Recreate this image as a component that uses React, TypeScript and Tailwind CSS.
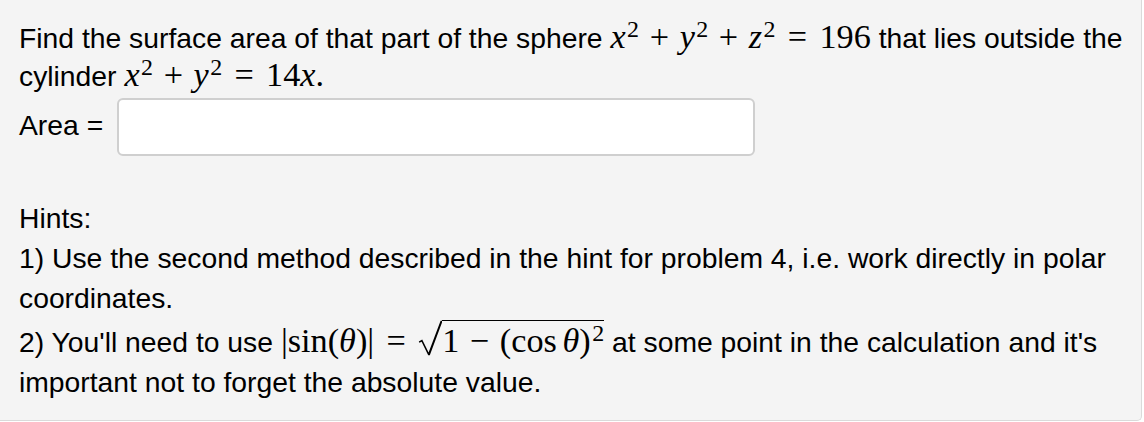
import type { ReactNode } from 'react';

const Mi = ({ children }: { children: ReactNode }) => <span className="italic">{children}</span>;

const Bin = ({ children }: { children: ReactNode }) => <span className="mx-[0.31em]">{children}</span>;

const Rel = ({ children }: { children: ReactNode }) => <span className="mx-[0.36em]">{children}</span>;

const Sup = ({ children }: { children: ReactNode }) => (
  <span className="ml-[0.06em] text-[0.7em] leading-[0] align-[0.45em]">{children}</span>
);

const Math = ({ children }: { children: ReactNode }) => (
  <span className="whitespace-nowrap text-[1.21em] leading-[0] font-['Liberation_Serif','Times_New_Roman',serif]">
    {children}
  </span>
);

// radical sign drawn as svg, radicand carries the vinculum as a top border
const Sqrt = ({ children }: { children: ReactNode }) => (
  <span className="whitespace-nowrap">
    <svg width="24" height="36" viewBox="0 0 24 36" className="inline align-[-4px]">
      <path d="M0.8 21.5 L4.2 19.4 L10.6 32.4 L22.6 0.8 L24 0.8 L24 2.4 L11.8 35.2 L10.2 35.2 L3.6 21.8 L1.4 22.8 Z" fill="#000" />
    </svg>
    <span className="border-t-[1.6px] border-black">{children}</span>
  </span>
);

export default function App() {
  return (
    <div className="w-[1144px] h-[422px] bg-white font-['Liberation_Sans',Arial,sans-serif] text-black">
      <div className="w-[1142px] h-[421px] bg-[#f4f4f4] border-r border-b border-[#dadada] rounded-br-[5px] pl-[19px] pr-[12px] pt-[19px] text-[28.3px]">
        <p className="leading-[38px]">
          Find the surface area of that part of the sphere{' '}
          <Math>
            <Mi>x</Mi>
            <Sup>2</Sup>
            <Bin>+</Bin>
            <Mi>y</Mi>
            <Sup>2</Sup>
            <Bin>+</Bin>
            <Mi>z</Mi>
            <Sup>2</Sup>
            <Rel>=</Rel>196
          </Math>{' '}
          that lies outside the cylinder{' '}
          <Math>
            <Mi>x</Mi>
            <Sup>2</Sup>
            <Bin>+</Bin>
            <Mi>y</Mi>
            <Sup>2</Sup>
            <Rel>=</Rel>14<Mi>x</Mi>.
          </Math>
        </p>

        <div className="mt-[3px] flex items-center">
          <span className="leading-[38px] pb-[5px]">Area =</span>
          <input
            type="text"
            className="ml-[14px] w-[638px] h-[58px] rounded-[6px] border-2 border-[#cfcfcf] bg-white px-3 outline-none"
          />
        </div>

        <div className="mt-[42px] leading-[40px]">
          <div>Hints:</div>
          <div>1) Use the second method described in the hint for problem 4, i.e. work directly in polar coordinates.</div>
          <div className="mt-[2px]">
            2) You'll need to use{' '}
            <Math>
              |sin(<Mi>θ</Mi>)|
              <Rel>=</Rel>
              <Sqrt>
                1<Bin>−</Bin>(cos<span className="ml-[0.167em]" />
                <Mi>θ</Mi>)<Sup>2</Sup>
              </Sqrt>
            </Math>{' '}
            at some point in the calculation and it's important not to forget the absolute value.
          </div>
        </div>
      </div>
    </div>
  );
}
